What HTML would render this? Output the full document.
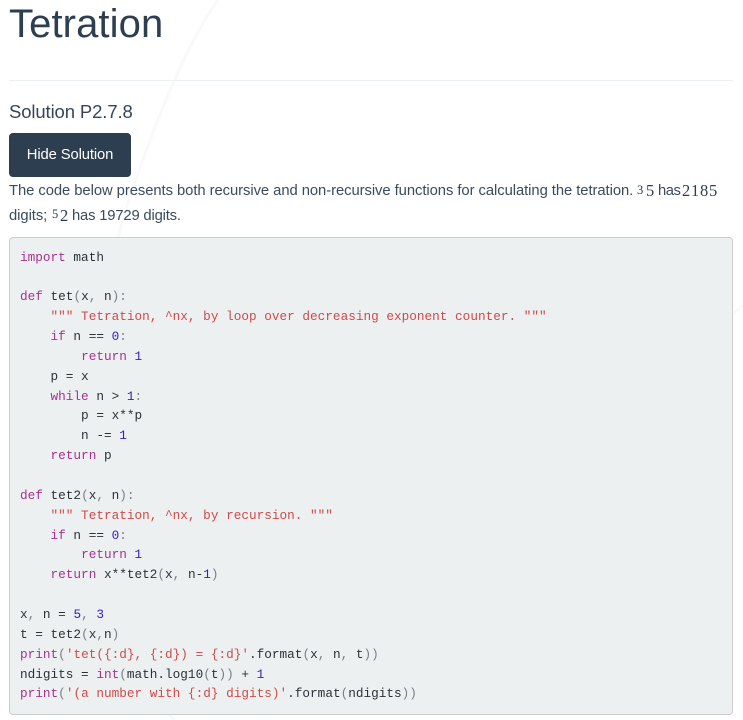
<!DOCTYPE html>
<html>
<head>
<meta charset="utf-8">
<style>
html,body{margin:0;padding:0;background:#fff;}
body{width:743px;height:720px;position:relative;overflow:hidden;font-family:"Liberation Sans",sans-serif;color:#2c3e50;}
.a{position:absolute;white-space:nowrap;}
h1{margin:0;font-weight:400;font-size:40px;line-height:48px;left:9px;top:0;letter-spacing:.1px;}
hr{position:absolute;left:9px;top:80px;width:724px;height:1px;margin:0;border:0;background:#ecf0f1;}
h4{margin:0;font-weight:400;font-size:18.5px;line-height:24px;left:9px;top:100px;letter-spacing:-.12px;color:#35465a;}
.btn{left:9px;top:133px;width:122px;height:44px;background:#2c3e50;border-radius:4px;color:#fff;font-size:14.8px;line-height:45px;text-align:center;letter-spacing:-.12px;}
.t{font-size:14.8px;line-height:20px;letter-spacing:-.06px;color:#3a4b5c;}
.m{font-family:"Liberation Serif",serif;font-size:16.5px;line-height:20px;letter-spacing:.75px;}
.s{font-family:"Liberation Serif",serif;font-size:12.5px;line-height:14px;}
pre{position:absolute;left:9px;top:237px;width:722px;height:476px;margin:0;padding:0;background:#ecf0f1;border:1px solid #ccc;border-radius:4px;overflow:hidden;}
code{position:absolute;left:10px;top:9.5px;font-family:"Liberation Mono",monospace;font-size:12.72px;line-height:19.86px;color:#2b3138;white-space:pre;}
.k{color:#a8328f}.n{color:#2f1fc4}.g{color:#76808a}
.r{color:#cf4a4a}
</style>
</head>
<body>
<svg class="a" style="left:0;top:0" width="743" height="720" viewBox="0 0 743 720" fill="none" stroke="#f9f9f9" stroke-width="3">
<path d="M218 0C175 60 130 190 118 238"/>
<path d="M150 700Q165 712 175 720"/>
<path d="M732 315L743 305"/>
</svg>
<h1 class="a">Tetration</h1>
<hr>
<h4 class="a">Solution P2.7.8</h4>
<div class="a btn">Hide Solution</div>
<div class="a t" style="left:9px;top:181px">The code below presents both recursive and non-recursive functions for calculating the tetration.</div>
<div class="a s" style="left:637px;top:183px">3</div>
<div class="a m" style="left:646px;top:181px">5</div>
<div class="a t" style="left:658px;top:181px;letter-spacing:-.5px">has</div>
<div class="a m" style="left:682px;top:181px">2185</div>
<div class="a t" style="left:9px;top:206px">digits;</div>
<div class="a s" style="left:52px;top:207px">5</div>
<div class="a m" style="left:60px;top:206px">2</div>
<div class="a t" style="left:72px;top:206px;letter-spacing:-.18px">has 19729 digits.</div>
<pre><code><span class="k">import</span> math

<span class="k">def</span> tet<span class="g">(</span>x<span class="g">,</span> n<span class="g">):</span>
    <span class="r">""" Tetration, ^nx, by loop over decreasing exponent counter. """</span>
    <span class="k">if</span> n == <span class="n">0</span><span class="g">:</span>
        <span class="k">return</span> <span class="n">1</span>
    p = x
    <span class="k">while</span> n &gt; <span class="n">1</span><span class="g">:</span>
        p = x**p
        n -= <span class="n">1</span>
    <span class="k">return</span> p

<span class="k">def</span> tet2<span class="g">(</span>x<span class="g">,</span> n<span class="g">):</span>
    <span class="r">""" Tetration, ^nx, by recursion. """</span>
    <span class="k">if</span> n == <span class="n">0</span><span class="g">:</span>
        <span class="k">return</span> <span class="n">1</span>
    <span class="k">return</span> x**tet2<span class="g">(</span>x<span class="g">,</span> n-<span class="n">1</span><span class="g">)</span>

x<span class="g">,</span> n = <span class="n">5</span><span class="g">,</span> <span class="n">3</span>
t = tet2<span class="g">(</span>x<span class="g">,</span>n<span class="g">)</span>
<span class="k">print</span><span class="g">(</span><span class="r">'tet({:d}, {:d}) = {:d}'</span>.format<span class="g">(</span>x<span class="g">,</span> n<span class="g">,</span> t<span class="g">))</span>
ndigits = <span class="k">int</span><span class="g">(</span>math.log10<span class="g">(</span>t<span class="g">))</span> + <span class="n">1</span>
<span class="k">print</span><span class="g">(</span><span class="r">'(a number with {:d} digits)'</span>.format<span class="g">(</span>ndigits<span class="g">))</span></code></pre>
</body>
</html>
